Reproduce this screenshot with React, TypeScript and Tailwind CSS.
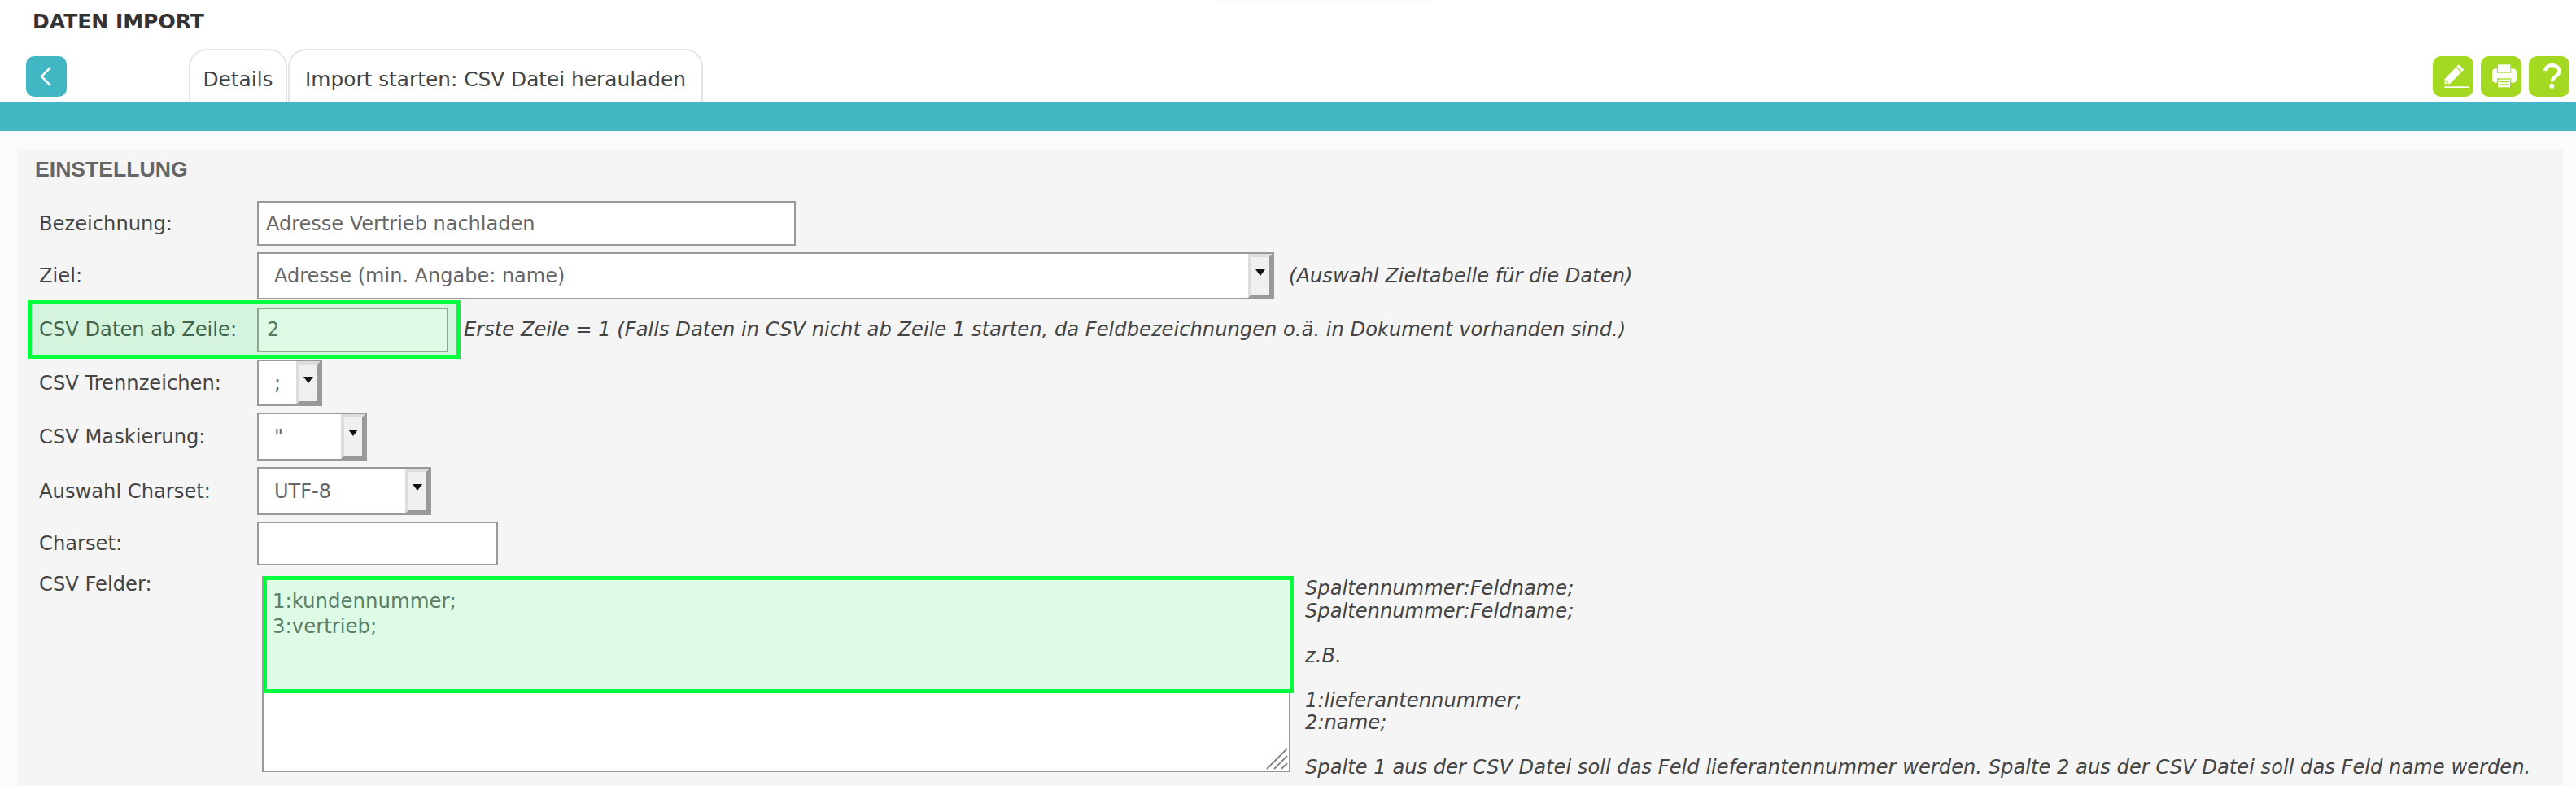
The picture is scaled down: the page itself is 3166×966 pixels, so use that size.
import React from "react";

const Label = ({ children, w = "w-[268px] text-[#444]" }: { children: React.ReactNode; w?: string }) => (
  <div className={`${w} shrink-0 text-[24.2px] leading-[30px]`}>{children}</div>
);

const Hint = ({ children, cls = "" }: { children: React.ReactNode; cls?: string }) => (
  <div className={`text-[24.2px] leading-[30px] italic text-[#444] whitespace-nowrap ${cls}`}>{children}</div>
);

const TextInput = ({ value, cls }: { value?: string; cls: string }) => (
  <div className={`flex items-center border-2 border-[#999] bg-white pl-[9px] text-[24px] text-[#666] ${cls}`}>{value}</div>
);

const Select = ({ value, cls, textCls = "pl-[19px]" }: { value: string; cls: string; textCls?: string }) => (
  <div className={`flex items-stretch border-2 border-[#999] bg-white text-[24px] text-[#666] ${cls}`}>
    <div className={`flex flex-1 items-center ${textCls}`}>{value}</div>
    <div className="flex w-[30px] items-start justify-center border-[4px] border-t-[#ddd] border-l-[#ddd] border-r-[#999] border-b-[#999] bg-[#f0f0f0] pt-[14px]">
      <svg width="12" height="10" viewBox="0 0 12 10"><path d="M0 1h12L6 9z" fill="#111" /></svg>
    </div>
  </div>
);

const IconBtn = ({ children }: { children: React.ReactNode }) => (
  <div className="h-[50px] w-[50px] rounded-[10px] bg-[#a4d922]">
    <svg viewBox="0 0 150 150" width="50" height="50">{children}</svg>
  </div>
);

const Tab = ({ label, cls }: { label: string; cls: string }) => (
  <div className={`flex h-[65px] items-center justify-center rounded-t-[22px] border-2 border-b-0 border-[#e4e4e4] bg-white pt-[8px] text-[24.8px] whitespace-nowrap text-[#444] ${cls}`}>
    {label}
  </div>
);

export default function App() {
  return (
    <div className="relative flex h-screen w-full flex-col overflow-hidden bg-white font-['DejaVu_Sans',sans-serif]">
      <div className="absolute left-[1500px] top-[-40px] h-[41px] w-[258px] rounded-b-[6px] bg-white shadow-[0_1px_4px_rgba(0,0,0,0.06)]" />
      <div className="h-[60px] pl-[40px] pt-[12px] text-[25px] leading-[30px] font-bold text-[#333]">DATEN IMPORT</div>

      <div className="flex h-[65px]">
        <div className="ml-[32px] mt-[9px] flex h-[50px] w-[50px] items-center justify-center rounded-[10px] bg-[#41b7c4]">
          <svg width="50" height="50" viewBox="0 0 50 50" fill="none"><path d="M30 14 19 25l11 11" stroke="#fff" strokeWidth="2.6" /></svg>
        </div>
        <div className="ml-[150px] flex gap-[1px]">
          <Tab label="Details" cls="w-[121px]" />
          <Tab label="Import starten: CSV Datei herauladen" cls="w-[510px]" />
        </div>
        <div className="ml-auto mr-[8px] mt-[9px] flex gap-[9px]">
          <IconBtn>
            <path d="M44 103V85L95 31l20 19-53 53z" fill="#fff" />
            <path d="M87 40l19 19M47 90l10 10" stroke="#a4d922" strokeWidth="4" />
            <rect x="43" y="112" width="89" height="5" fill="#fff" />
          </IconBtn>
          <IconBtn>
            <rect x="42" y="46" width="90" height="52" rx="13" fill="#fff" />
            <rect x="60" y="28" width="52" height="34" fill="#a4d922" />
            <rect x="63" y="31" width="46" height="27" fill="#fff" />
            <rect x="60" y="82" width="52" height="36" fill="#a4d922" />
            <rect x="64" y="86" width="44" height="29" fill="#fff" />
            <path d="M68 95h36M68 105h36" stroke="#a4d922" strokeWidth="4" />
          </IconBtn>
          <IconBtn>
            <path d="M60 54C63 40 74 33 86 33c15 0 26 10 26 22 0 11-7 16-14 21-8 5-12 9-12 18" fill="none" stroke="#fff" strokeWidth="13" />
            <circle cx="85" cy="110" r="9" fill="#fff" />
          </IconBtn>
        </div>
      </div>

      <div className="h-[36px] bg-[#41b7c4]" />

      <div className="flex-1 bg-[#fbfbfb] pl-[22px] pr-[16px] pt-[22px]">
        <div className="h-full bg-[#f5f5f5]">
          <div className="h-[64px] pl-[21px] pt-[10px] font-['Liberation_Sans',sans-serif] text-[26.6px] leading-[30px] font-bold text-[#666]">EINSTELLUNG</div>

          <div className="ml-[26px] flex items-center">
            <Label>Bezeichnung:</Label>
            <TextInput value="Adresse Vertrieb nachladen" cls="h-[55px] w-[662px]" />
          </div>

          <div className="ml-[26px] mt-[8px] flex items-center">
            <Label>Ziel:</Label>
            <Select value="Adresse (min. Angabe: name)" cls="h-[58px] w-[1250px]" />
            <Hint cls="ml-[18px]">(Auswahl Zieltabelle für die Daten)</Hint>
          </div>

          <div className="ml-[12px] mt-[1px] flex items-center">
            <div className="flex h-[72px] w-[532px] items-center border-[5px] border-[#00ff3c] bg-[#d4f4de] pl-[9px]">
              <Label w="w-[268px] text-[#42644c]">CSV Daten ab Zeile:</Label>
              <div className="flex h-[55px] w-[235px] items-center border-2 border-[#8aaa90] bg-[#defce5] pl-[10px] text-[24px] text-[#557a60]">2</div>
            </div>
            <Hint cls="ml-[4px]">Erste Zeile = 1 (Falls Daten in CSV nicht ab Zeile 1 starten, da Feldbezeichnungen o.ä. in Dokument vorhanden sind.)</Hint>
          </div>

          <div className="ml-[26px] mt-[1px] flex items-center">
            <Label>CSV Trennzeichen:</Label>
            <Select value=";" cls="h-[57px] w-[80px]" />
          </div>

          <div className="ml-[26px] mt-[8px] flex items-center">
            <Label>CSV Maskierung:</Label>
            <Select value={'"'} cls="h-[59px] w-[135px]" />
          </div>

          <div className="ml-[26px] mt-[8px] flex items-center">
            <Label>Auswahl Charset:</Label>
            <Select value="UTF-8" cls="h-[59px] w-[214px]" />
          </div>

          <div className="ml-[26px] mt-[8px] flex items-center">
            <Label>Charset:</Label>
            <TextInput cls="h-[54px] w-[296px]" />
          </div>

          <div className="ml-[26px] mt-[13px] flex items-start">
            <div className="-mt-[5px]"><Label w="w-[274px] text-[#444]">CSV Felder:</Label></div>
            <div className="relative h-[241px] w-[1264px] border-2 border-[#999] bg-white">
              <svg className="absolute bottom-[1px] right-[1px]" width="28" height="28" viewBox="0 0 28 28">
                <path d="M2 27 27 2M11 27 27 11M20 27l7-7" stroke="#888" strokeWidth="2" />
              </svg>
              <div className="absolute left-[-1px] top-[-2px] h-[144px] w-[1267px] border-[5px] border-[#00ff3c] bg-[#defce5] pl-[7px] pt-[11px] text-[24.4px] leading-[30.5px] text-[#5c7d66]">
                <div>1:kundennummer;</div>
                <div>3:vertrieb;</div>
              </div>
            </div>
            <div className="ml-[18px] pt-[2px] text-[24.2px] leading-[27.5px] italic text-[#444] whitespace-nowrap">
              <div>Spaltennummer:Feldname;</div>
              <div>Spaltennummer:Feldname;</div>
              <div className="h-[27.5px]" />
              <div>z.B.</div>
              <div className="h-[27.5px]" />
              <div>1:lieferantennummer;</div>
              <div>2:name;</div>
              <div className="h-[27.5px]" />
              <div>Spalte 1 aus der CSV Datei soll das Feld lieferantennummer werden. Spalte 2 aus der CSV Datei soll das Feld name werden.</div>
            </div>
          </div>
        </div>
      </div>
    </div>
  );
}
